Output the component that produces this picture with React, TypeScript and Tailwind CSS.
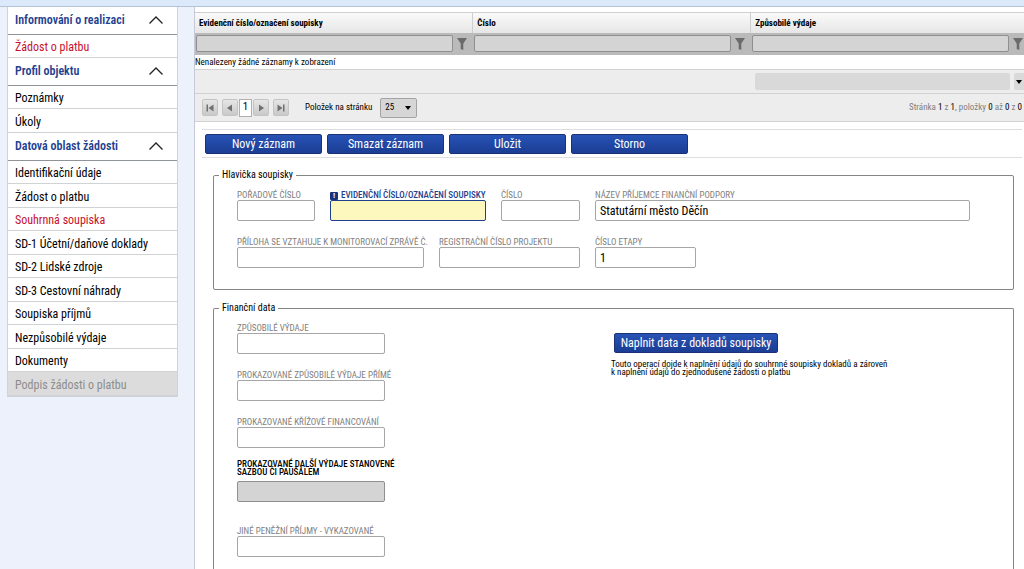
import { ReactNode, useId, useState } from "react";
import clsx from "clsx";

interface MenuItem {
  label: string;
  active?: boolean;
  disabled?: boolean;
}

interface MenuGroup {
  title: string;
  items: MenuItem[];
}

const menu: MenuGroup[] = [
  {
    title: "Informování o realizaci",
    items: [{ label: "Žádost o platbu", active: true }],
  },
  {
    title: "Profil objektu",
    items: [{ label: "Poznámky" }, { label: "Úkoly" }],
  },
  {
    title: "Datová oblast žádosti",
    items: [
      { label: "Identifikační údaje" },
      { label: "Žádost o platbu" },
      { label: "Souhrnná soupiska", active: true },
      { label: "SD-1 Účetní/daňové doklady" },
      { label: "SD-2 Lidské zdroje" },
      { label: "SD-3 Cestovní náhrady" },
      { label: "Soupiska příjmů" },
      { label: "Nezpůsobilé výdaje" },
      { label: "Dokumenty" },
      { label: "Podpis žádosti o platbu", disabled: true },
    ],
  },
];

const columns = [
  "Evidenční číslo/označení soupisky",
  "Číslo",
  "Způsobilé výdaje",
];

const actions = ["Nový záznam", "Smazat záznam", "Uložit", "Storno"];

function MenuSection({ title, items }: MenuGroup) {
  const [open, setOpen] = useState(true);

  return (
    <section>
      <button
        type="button"
        onClick={() => setOpen(!open)}
        className="flex h-7 w-full items-center justify-between border-b border-[#8f9499] pr-3.5 pb-0.5 pl-[7px] text-xs font-semibold text-[#1f3f8f]"
      >
        {title}
        <svg
          viewBox="0 0 14 8"
          className={clsx("h-2 w-3.5", !open && "rotate-180")}
          fill="none"
          stroke="#222"
          strokeWidth="1.3"
        >
          <path d="M0.5 7.5 L7 1 L13.5 7.5" />
        </svg>
      </button>
      {open && (
        <ul>
          {items.map((item) => (
            <li
              key={item.label}
              className={clsx(
                "flex h-[23px] items-center border-b border-[#cfd3d6] pt-0.5 pl-[7px] text-xs even:h-6",
                item.disabled && "bg-[#dcdcdc] text-[#8c8c8c]",
                item.active && "text-[#c8102e]"
              )}
            >
              {item.disabled ? item.label : <a href="#">{item.label}</a>}
            </li>
          ))}
        </ul>
      )}
    </section>
  );
}

function FunnelIcon() {
  return (
    <svg viewBox="0 0 10 12" className="h-3 w-2.5" fill="#6b6b6b">
      <path d="M0 0h10L6.3 5.5V12L3.7 11V5.5z" />
    </svg>
  );
}

function PagerButton({ label, path }: { label: string; path: string }) {
  return (
    <button
      type="button"
      aria-label={label}
      className="flex h-[17px] w-4 items-center justify-center rounded-xs border border-[#c4c4c4] bg-linear-to-b from-[#e6e6e6] to-[#c9c9c9]"
    >
      <svg viewBox="0 0 8 8" className="size-2" fill="#707070">
        <path d={path} />
      </svg>
    </button>
  );
}

interface FieldProps {
  label: ReactNode;
  width: string;
  value?: string;
  required?: boolean;
}

function Field({ label, width, value = "", required }: FieldProps) {
  const id = useId();

  return (
    <div className={clsx("flex flex-col", width)}>
      <label
        htmlFor={id}
        className={clsx(
          "flex h-[11px] items-center gap-[3px] pt-0.5 text-[9px] leading-[9px] whitespace-nowrap",
          required ? "font-medium text-[#1f3f8f]" : "text-[#808080]"
        )}
      >
        {required && (
          <span className="flex size-2 items-center justify-center rounded-[1px] bg-[#16327f] text-[8px] leading-none font-bold text-white">
            !
          </span>
        )}
        {label}
      </label>
      <input
        id={id}
        defaultValue={value}
        className={clsx(
          "h-[21px] w-full rounded-xs border px-1 text-xs text-black",
          required ? "border-[#1f3f8f] bg-[#fdf8bd]" : "border-[#a6a6a6] bg-white"
        )}
      />
    </div>
  );
}

export default function App() {
  return (
    <div className="flex h-screen flex-col overflow-hidden bg-[#edf1fc] font-['Roboto_Condensed','Liberation_Sans_Narrow',sans-serif] text-black">
      <div className="h-[7px] shrink-0 border-b border-[#b5c3d6] bg-[#dbe9fa]" />
      <div className="flex min-h-0 flex-1">
        <nav className="w-[194px] shrink-0 pr-4 pl-[7px]">
          <div className="border-x border-b border-[#cfd3d6] bg-white">
            {menu.map((group) => (
              <MenuSection key={group.title} {...group} />
            ))}
          </div>
        </nav>

        <main className="flex min-w-0 flex-1 flex-col overflow-hidden border-l border-[#c5cad6] bg-white pt-[5px]">
          <table className="w-[calc(100%+5px)] shrink-0 table-fixed border-collapse">
            <thead>
              <tr className="h-5 bg-linear-to-b from-[#fafafa] to-[#e6e6e6]">
                {columns.map((column) => (
                  <th
                    key={column}
                    className="border-t border-r border-[#cfcfcf] p-0 pl-1 text-left text-[9px] leading-3 font-bold"
                  >
                    {column}
                  </th>
                ))}
              </tr>
              <tr className="h-[22px] bg-[#bababa]">
                {columns.map((column) => (
                  <td key={column} className="p-0">
                    <div className="flex items-center gap-1 pr-1.5 pl-px">
                      <input
                        aria-label={column}
                        className="h-[17px] min-w-0 flex-1 rounded-xs border border-[#8f8f8f] bg-[#d4d4d4] px-1 text-[9px]"
                      />
                      <button type="button" aria-label={`Filtr ${column}`}>
                        <FunnelIcon />
                      </button>
                    </div>
                  </td>
                ))}
              </tr>
            </thead>
            <tbody>
              <tr className="h-[15px]">
                <td colSpan={3} className="p-0 text-[9px] leading-3">
                  Nenalezeny žádné záznamy k zobrazení
                </td>
              </tr>
            </tbody>
            <tfoot>
              <tr className="h-6 border-y border-[#d2d2d2] bg-[#ededed]">
                <td colSpan={2} className="p-0" />
                <td className="p-0">
                  <div className="flex gap-1 pl-1">
                    <input
                      aria-label="Souhrn"
                      disabled
                      className="h-[17px] min-w-0 flex-1 rounded-xs bg-[#d9d9d9]"
                    />
                    <button
                      type="button"
                      aria-label="Funkce souhrnu"
                      className="flex h-[17px] w-[15px] items-center rounded-xs bg-[#d9d9d9] pl-0.5"
                    >
                      <svg viewBox="0 0 6 4" className="h-1 w-1.5">
                        <path d="M0 0h6L3 4z" />
                      </svg>
                    </button>
                  </div>
                </td>
              </tr>
            </tfoot>
          </table>

          <div className="flex h-7 shrink-0 items-center border-b border-[#d2d2d2] bg-[#ededed] pr-0.5 pl-[7px] text-[9px]">
            <div className="flex items-center gap-1">
              <PagerButton label="První" path="M0.5 0.5h1.5v7H0.5zM7.5 0.5v7L2.5 4z" />
              <div className="flex items-center gap-px">
                <PagerButton label="Předchozí" path="M6 0.5v7L1 4z" />
                <span className="flex h-[18px] w-[13px] items-center justify-center border border-[#b0b0b0] bg-white text-[11px]">
                  1
                </span>
                <PagerButton label="Další" path="M2 0.5v7L7 4z" />
              </div>
              <PagerButton label="Poslední" path="M0.5 0.5v7L5.5 4zM6 0.5h1.5v7H6z" />
            </div>
            <label htmlFor="page-size" className="pr-2 pl-4">
              Položek na stránku
            </label>
            <div className="relative">
              <select
                id="page-size"
                defaultValue="25"
                className="h-5 w-[37px] appearance-none rounded-xs border border-[#a3a3a3] bg-[#d6d6d6] pl-1"
              >
                <option>10</option>
                <option>25</option>
                <option>50</option>
              </select>
              <svg
                viewBox="0 0 6 4"
                className="pointer-events-none absolute top-2 right-1.5 h-1 w-1.5"
              >
                <path d="M0 0h6L3 4z" />
              </svg>
            </div>
            <p className="ml-auto text-[#808080]">
              Stránka <span className="text-black">1</span> z{" "}
              <span className="text-black">1</span>, položky{" "}
              <span className="text-black">0</span> až{" "}
              <span className="text-black">0</span> z{" "}
              <span className="text-black">0</span>
            </p>
          </div>

          <div className="mt-[7px] mr-0.5 ml-[7px] flex shrink-0 gap-[5px] border-y border-[#dedede] px-[3px] pt-1 pb-[3px]">
            {actions.map((action) => (
              <button
                key={action}
                type="button"
                className="h-5 w-[117px] rounded-xs border border-[#1b3277] bg-linear-to-b from-[#2753b5] to-[#1b3d94] text-xs leading-4 text-white"
              >
                {action}
              </button>
            ))}
          </div>

          <div className="flex min-h-0 flex-1 flex-col gap-3 pt-[11px] pr-2.5 pl-[18px]">
            <fieldset className="shrink-0 rounded-xs border border-[#858585] px-[5px] pb-[21px]">
              <legend className="px-[3px] text-[10px] leading-3">Hlavička soupisky</legend>
              <div className="flex flex-col gap-[15px] px-[18px] pt-2">
                <div className="flex gap-[15px]">
                  <Field label="POŘADOVÉ ČÍSLO" width="w-[78px]" />
                  <Field label="EVIDENČNÍ ČÍSLO/OZNAČENÍ SOUPISKY" width="w-[156px]" required />
                  <Field label="ČÍSLO" width="w-[79px]" />
                  <Field
                    label="NÁZEV PŘÍJEMCE FINANČNÍ PODPORY"
                    width="w-[375px]"
                    value="Statutární město Děčín"
                  />
                </div>
                <div className="flex gap-[15px]">
                  <Field label="PŘÍLOHA SE VZTAHUJE K MONITOROVACÍ ZPRÁVĚ Č." width="w-[187px]" />
                  <Field label="REGISTRAČNÍ ČÍSLO PROJEKTU" width="w-[141px]" />
                  <Field label="ČÍSLO ETAPY" width="w-[101px]" value="1" />
                </div>
              </div>
            </fieldset>

            <fieldset className="min-h-0 flex-1 rounded-t-xs border border-b-0 border-[#858585] px-[5px]">
              <legend className="px-[3px] text-[10px] leading-3">Finanční data</legend>
              <div className="grid grid-cols-[374px_1fr] px-[18px] pt-2">
                <div className="flex flex-col gap-3">
                  <div className="flex flex-col gap-[15px]">
                    <Field label="ZPŮSOBILÉ VÝDAJE" width="w-[148px]" />
                    <Field label="PROKAZOVANÉ ZPŮSOBILÉ VÝDAJE PŘÍMÉ" width="w-[148px]" />
                    <Field label="PROKAZOVANÉ KŘÍŽOVÉ FINANCOVÁNÍ" width="w-[148px]" />
                  </div>
                  <div className="flex w-[148px] flex-col pb-[11px]">
                    <label
                      htmlFor="flat-rate"
                      className="pb-[5px] text-[9px] leading-2 font-medium whitespace-nowrap"
                    >
                      PROKAZOVANÉ DALŠÍ VÝDAJE STANOVENÉ
                      <br />
                      SAZBOU ČI PAUŠÁLEM
                    </label>
                    <input
                      id="flat-rate"
                      readOnly
                      className="h-[21px] rounded-xs border border-[#8f8f8f] bg-[#d4d4d4] px-1 text-xs"
                    />
                  </div>
                  <Field label="JINÉ PENĚŽNÍ PŘÍJMY - VYKAZOVANÉ" width="w-[148px]" />
                </div>
                <div className="pt-2">
                  <button
                    type="button"
                    className="ml-[3px] h-5 w-[164px] rounded-xs border border-[#1b3277] bg-linear-to-b from-[#2753b5] to-[#1b3d94] text-xs leading-4 text-white"
                  >
                    Naplnit data z dokladů soupisky
                  </button>
                  <p className="pt-1.5 text-[9px] leading-2">
                    Touto operací dojde k naplnění údajů do souhrnné soupisky dokladů a zároveň
                    <br />
                    k naplnění údajů do zjednodušené žádosti o platbu
                  </p>
                </div>
              </div>
            </fieldset>
          </div>
        </main>
      </div>
    </div>
  );
}
